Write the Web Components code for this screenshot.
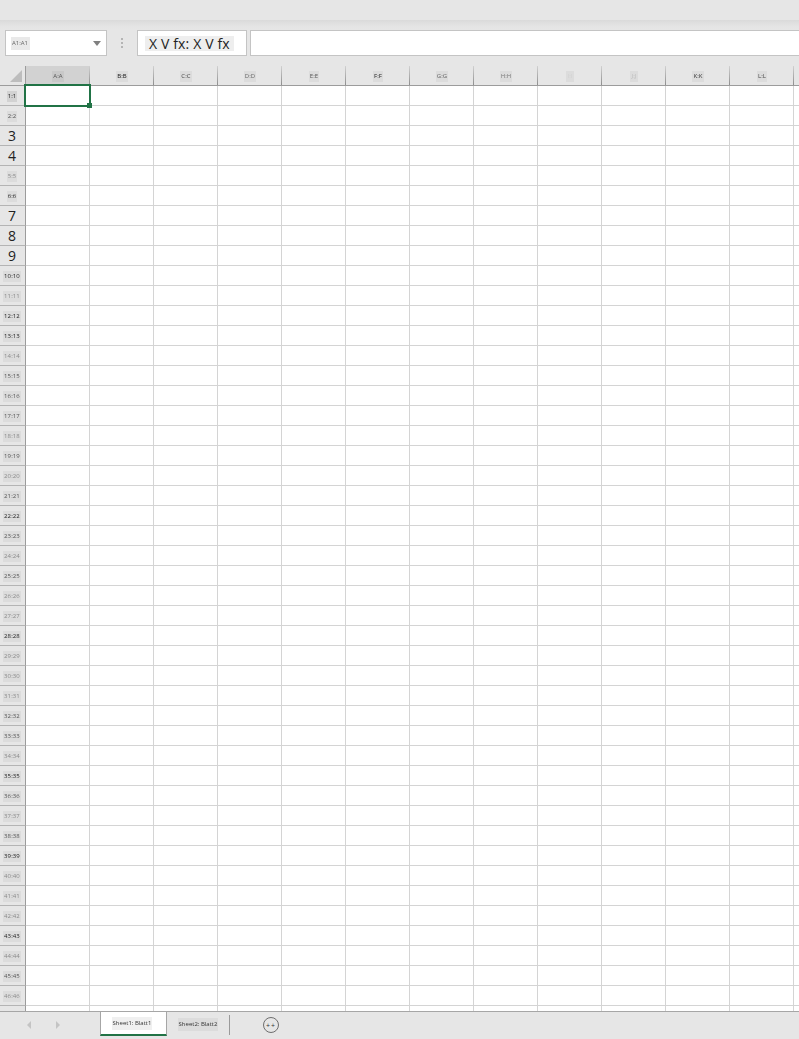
<!DOCTYPE html>
<html>
<head>
<meta charset="utf-8">
<title>Sheet</title>
<style>
    html, body { margin: 0; height: 100%; }
    body { background: #e6e6e6; font-family: "Open Sans", "Liberation Sans", sans-serif; overflow: hidden; }
    #app { display: flex; flex-direction: column; height: 1039px; }
</style>
</head>
<body>
<div id="app">
    <top-ribbon></top-ribbon>
    <formula-bar></formula-bar>
    <sheet-grid></sheet-grid>
    <tab-bar>
        <sheet-tab active>Sheet1: Blatt1</sheet-tab>
        <sheet-tab>Sheet2: Blatt2</sheet-tab>
    </tab-bar>
</div>

<script>
class TopRibbon extends HTMLElement {
    constructor() {
        super();
        this.attachShadow({ mode: "open" });
        this.shadowRoot.innerHTML = `
            <style>
                :host { display: block; height: 30px; flex: none; background: #e6e6e6; padding-top: 20px; box-sizing: border-box; }
                div { height: 10px; background: linear-gradient(#dadada, #e4e4e4 60%, #e6e6e6); }
            </style>
            <div></div>
        `;
    }
}

class FormulaBar extends HTMLElement {
    constructor() {
        super();
        this.attachShadow({ mode: "open" });
        this.shadowRoot.innerHTML = `
            <style>
                :host { display: flex; flex: none; height: 26px; padding-left: 5px; background: #e6e6e6; }
                .box { box-sizing: border-box; height: 26px; background: #fff; border: 1px solid #c4c4c4; display: flex; align-items: center; }
                #name { width: 102px; padding-left: 5px; justify-content: space-between; padding-right: 5px; }
                #name span { background: #e9e9e9; color: #666; font-size: 6px; line-height: 13px; padding: 0 2px 0 1px; filter: blur(.3px); }
                #name i { border: 4px solid transparent; border-top: 5px solid #808080; border-bottom: 0; }
                #dots { width: 30px; display: flex; flex-direction: column; align-items: center; justify-content: center; gap: 2px; }
                #dots b { width: 2px; height: 2px; background: #b4b4b4; }
                #fx { width: 110px; padding-left: 7px; }
                #fx span { background: #eeeeee; color: #222; font-size: 14px; line-height: 15px; padding: 0 4px; white-space: nowrap; letter-spacing: .14px; }
                #input { flex: 1; margin-left: 3px; border-right: 0; }
            </style>
            <div class="box" id="name"><span>A1:A1</span><i></i></div>
            <div id="dots"><b></b><b></b><b></b></div>
            <div class="box" id="fx"><span>X V fx: X V fx</span></div>
            <div class="box" id="input"></div>
        `;
    }
}

class SheetGrid extends HTMLElement {
    constructor() {
        super();
        this.attachShadow({ mode: "open" });
        this.render();
    }

    render() {
        let cols = { A: "#555", B: "#111", C: "#444", D: "#666", E: "#555", F: "#222", G: "#666", H: "#777", I: "#d2d2d2", J: "#bbb", K: "#333", L: "#444" };
        let bigRows = [3, 4, 7, 8, 9];
        let darkRows = [1, 6, 10, 12, 13, 22, 28, 35, 39, 43];
        let midRows = [2, 15, 16, 17, 19, 21, 23, 25, 32, 33, 36, 38, 45];

        let header = `<div class="corner"><i></i></div>`;
        for (let c in cols) {
            header += `<div class="col ${c == "A" ? "on" : ""}"><span style="color:${cols[c]}">${c}:${c}</span></div>`;
        }
        header += `<div class="col tail"></div>`;

        let rows = "";
        for (let r = 1; r <= 47; r++) {
            let label = "";
            if (bigRows.includes(r)) {
                label = `<em>${r}</em>`;
            } else if (r < 47) {
                // row 47 is hidden behind the tab bar
                let shade = darkRows.includes(r) ? "dark" : midRows.includes(r) ? "mid" : "";
                label = `<span class="${shade}">${r}:${r}</span>`;
            }
            rows += `<div class="rowhead ${r == 1 ? "on" : ""}">${label}</div>`;
            for (let c in cols) rows += `<div class="cell"></div>`;
            rows += `<div class="cell tail"></div>`;
        }

        this.shadowRoot.innerHTML = `
            <style>
                :host { display: block; flex: 1; min-height: 0; overflow: hidden; position: relative; padding-top: 10px; background: #e6e6e6; }
                #grid { display: grid; grid-template-columns: 26px repeat(12, 64px) 5px; grid-auto-rows: 20px; }
                #grid > div { box-sizing: border-box; }
                .corner { border-bottom: 1px solid #9c9c9c; border-right: 1px solid #9c9c9c; position: relative; background: #e6e6e6; }
                .corner i { position: absolute; left: 10px; top: 4px; width: 0; height: 0; border-left: 12px solid transparent; border-bottom: 12px solid #bdbdbd; }
                .col { background: #e6e6e6 linear-gradient(#d0d0d0, #8e8e8e) right / 1px 100% no-repeat; border-bottom: 1px solid #9c9c9c; display: flex; align-items: center; justify-content: center; }
                .col.on { background-color: #d2d2d2; }
                .col.tail { background-image: none; }
                span { background: #dcdcdc; color: #8a8a8a; font-size: 6px; line-height: 11px; padding: 0 1px; margin-top: 1px; white-space: nowrap; filter: blur(.35px); letter-spacing: .1px; }
                .on span { background: #c8c8c8; }
                .rowhead.on span { background: #d2d2d2; color: #222; }
                span.dark { color: #1c1c1c; }
                span.mid { color: #555; }
                .rowhead { background: #e6e6e6; border-right: 1px solid #9c9c9c; border-bottom: 1px solid #b4b4b4; display: flex; align-items: center; justify-content: center; padding-right: 1px; }
                .rowhead em { font-style: normal; font-size: 14px; color: #222; line-height: 19px; }
                .cell { background: #fff; border-right: 1px solid #d4d4d4; border-bottom: 1px solid #d4d4d4; }
                .cell.tail { border-right: 0; }
                #selection { position: absolute; left: 24px; top: 28px; width: 67px; height: 23px; box-sizing: border-box; border: 2px solid #217346; pointer-events: none; }
                #handle { position: absolute; left: 87px; top: 47px; width: 5px; height: 5px; background: #217346; }
            </style>
            <div id="grid">${header}${rows}</div>
            <div id="selection"></div>
            <div id="handle"></div>
        `;
    }
}

class TabBar extends HTMLElement {
    constructor() {
        super();
        this.attachShadow({ mode: "open" });
        this.shadowRoot.innerHTML = `
            <style>
                :host { display: flex; flex: none; height: 28px; box-sizing: border-box; border-top: 1px solid #a6a6a6; background: #e6e6e6; }
                #nav { width: 100px; flex: none; display: flex; align-items: center; padding: 0 0 1px 27px; box-sizing: border-box; gap: 25px; }
                #nav i { width: 0; height: 0; border: 4px solid transparent; }
                #nav i:first-child { border-right-color: #c4c4c4; border-left: 0; }
                #nav i:last-child { border-left-color: #c4c4c4; border-right: 0; }
                #sep { width: 1px; height: 20px; margin: 3px 0 0 0; background: #9a9a9a; }
                #add { width: 16px; height: 16px; box-sizing: border-box; margin: 5px 0 0 33px; border: 1px solid #6e6e6e; border-radius: 50%; display: flex; align-items: center; justify-content: center; font-size: 7px; color: #333; line-height: 1; letter-spacing: 1px; }
            </style>
            <div id="nav"><i></i><i></i></div>
            <slot></slot>
            <div id="sep"></div>
            <div id="add">++</div>
        `;
    }
}

class SheetTab extends HTMLElement {
    constructor() {
        super();
        this.attachShadow({ mode: "open" });
        this.shadowRoot.innerHTML = `
            <style>
                :host { display: flex; align-items: center; justify-content: center; box-sizing: border-box; width: 62px; height: 25px; }
                :host([active]) { width: 67px; margin-top: -1px; height: 25px; background: #fff; border-left: 1px solid #a6a6a6; border-right: 1px solid #a6a6a6; border-top: 1px solid #a6a6a6; border-bottom: 2px solid #217346; }
                span { background: #dcdcdc; color: #333; font-size: 6px; line-height: 13px; padding: 0 1px; white-space: nowrap; filter: blur(.25px); }
                :host([active]) span { background: #f0f0f0; margin: 1px 3px 0 0; }
            </style>
            <span><slot></slot></span>
        `;
    }
}

customElements.define("top-ribbon", TopRibbon);
customElements.define("formula-bar", FormulaBar);
customElements.define("sheet-grid", SheetGrid);
customElements.define("tab-bar", TabBar);
customElements.define("sheet-tab", SheetTab);
</script>
</body>
</html>
